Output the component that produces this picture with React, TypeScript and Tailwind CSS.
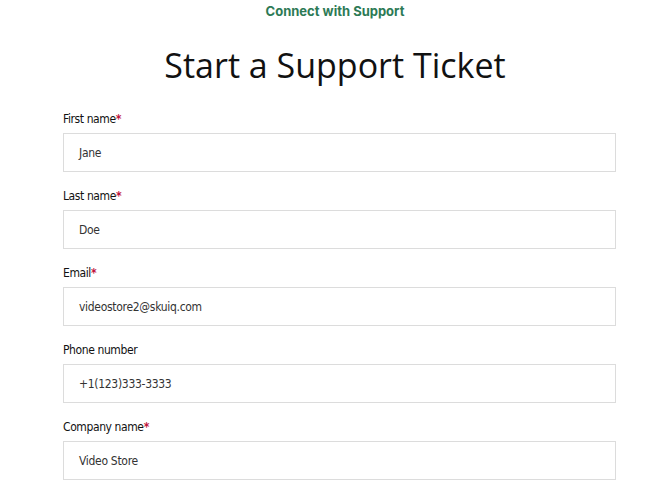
import React from "react";

const fields = [
  { label: "First name", value: "Jane", required: true },
  { label: "Last name", value: "Doe", required: true },
  { label: "Email", value: "videostore2@skuiq.com", required: true },
  { label: "Phone number", value: "+1(123)333-3333", required: false },
  { label: "Company name", value: "Video Store", required: true },
];

export default function App() {
  return (
    <div className="w-[670px] h-[496px] bg-white overflow-hidden">
      <div className="pt-[2px] text-center text-[13px] font-bold text-[#2d7a55] leading-[18px] [font-family:Inter,sans-serif]">
        Connect with Support
      </div>
      <h1 className="mt-[22px] text-center text-[34px] leading-[46px] text-[#111] [font-family:'Open_Sans',sans-serif]">
        Start a Support Ticket
      </h1>
      <div className="ml-[63px] w-[553px] mt-[23px] flex flex-col gap-[16px] [font-family:'DejaVu_Sans_Condensed','DejaVu_Sans',sans-serif]">
        {fields.map((f) => (
          <div key={f.label} className="flex flex-col gap-[6px]">
            <div className="text-[12px] leading-[16px] text-[#111] tracking-[-0.4px]">
              {f.label}
              {f.required && <span className="text-[#c0143c] font-bold">*</span>}
            </div>
            <div className="h-[39px] border border-[#dcdcdc] flex items-center pl-[15px] text-[12px] text-[#333] tracking-[-0.3px]">
              {f.value}
            </div>
          </div>
        ))}
      </div>
    </div>
  );
}
